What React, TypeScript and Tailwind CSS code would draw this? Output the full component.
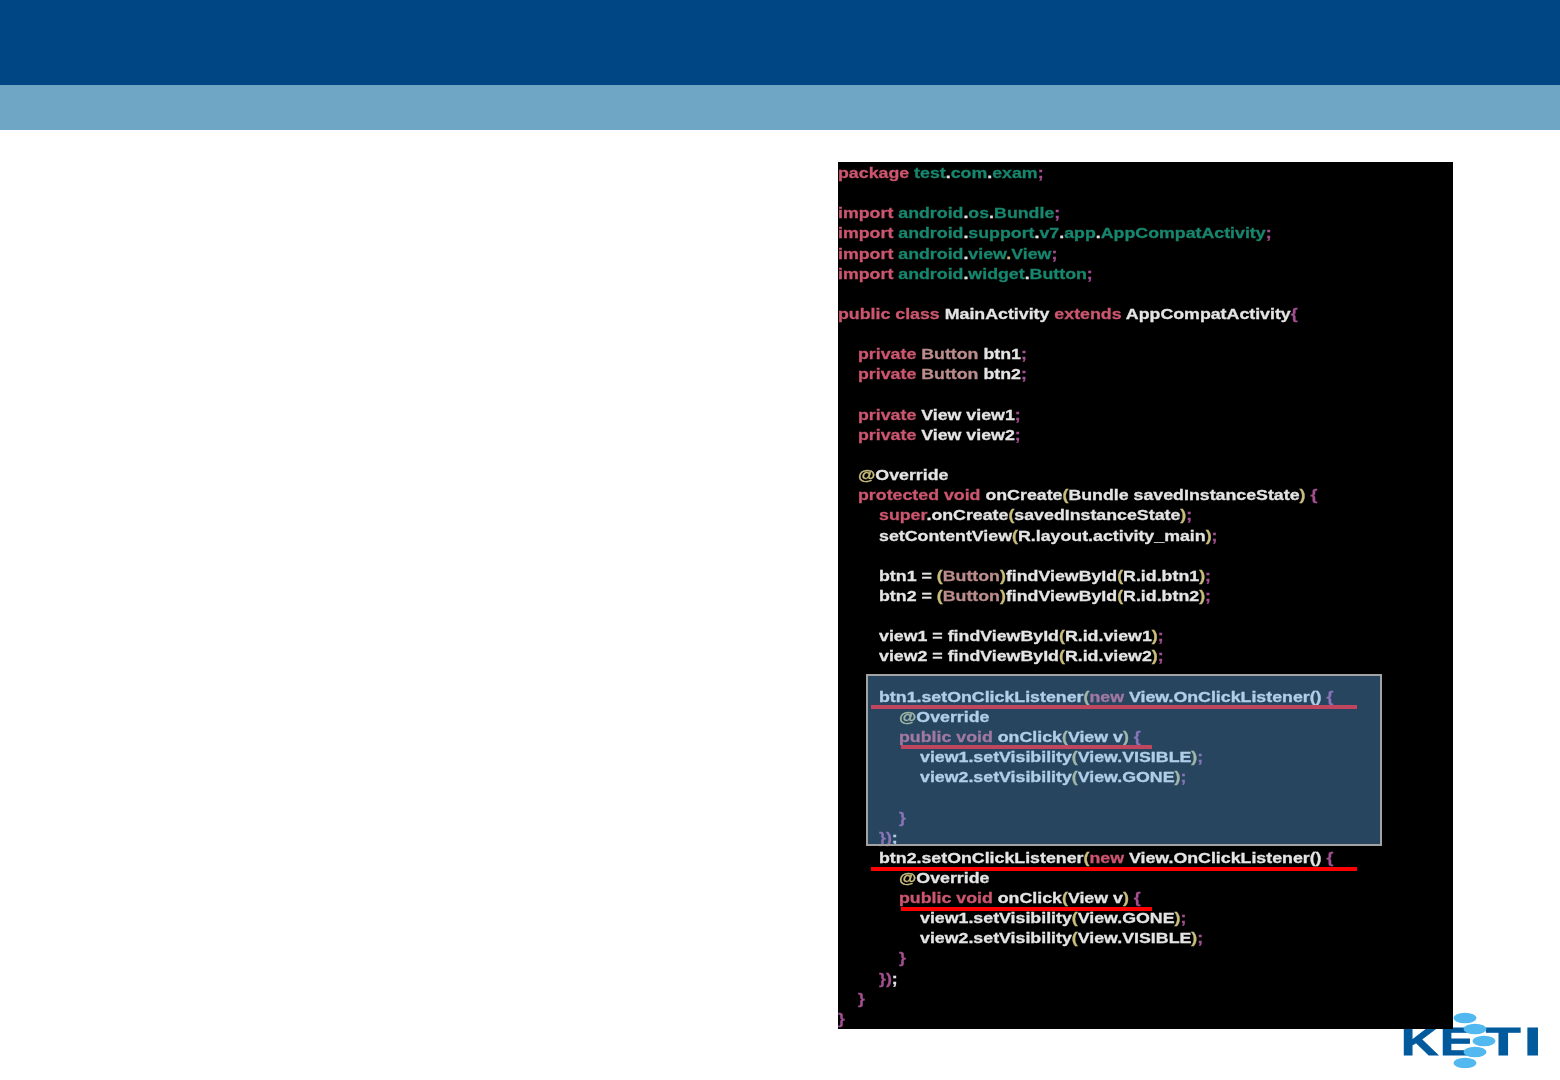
const R = "text-[#cc566f]";
const T = "text-[#17866e]";
const W = "text-[#e4e4e4]";
const Y = "text-[#c9bd7c]";
const P = "text-[#a34f92]";
const B = "text-[#bb8c8c]";

const INDENT = ["pl-0", "pl-[20px]", "pl-[41px]", "pl-[61px]", "pl-[82px]"];

type Seg = [string, string];
type Line = { level?: number; segs?: Seg[] };

const clickBlock = (name: string, first: string, second: string): Line[] => [
  { level: 2, segs: [[W, `${name}.setOnClickListener`], [Y, "("], [R, "new"], [W, " View.OnClickListener() "], [P, "{"]] },
  { level: 3, segs: [[Y, "@"], [W, "Override"]] },
  { level: 3, segs: [[R, "public void "], [W, "onClick"], [Y, "("], [W, "View v"], [Y, ")"], [P, " {"]] },
  { level: 4, segs: [[W, "view1.setVisibility"], [Y, "("], [W, `View.${first}`], [Y, ")"], [P, ";"]] },
  { level: 4, segs: [[W, "view2.setVisibility"], [Y, "("], [W, `View.${second}`], [Y, ")"], [P, ";"]] },
];

const lines: Line[] = [
  { segs: [[R, "package "], [T, "test"], [W, "."], [T, "com"], [W, "."], [T, "exam"], [P, ";"]] },
  {},
  { segs: [[R, "import "], [T, "android"], [W, "."], [T, "os"], [W, "."], [T, "Bundle"], [P, ";"]] },
  { segs: [[R, "import "], [T, "android"], [W, "."], [T, "support"], [W, "."], [T, "v7"], [W, "."], [T, "app"], [W, "."], [T, "AppCompatActivity"], [P, ";"]] },
  { segs: [[R, "import "], [T, "android"], [W, "."], [T, "view"], [Y, "."], [T, "View"], [P, ";"]] },
  { segs: [[R, "import "], [T, "android"], [W, "."], [T, "widget"], [W, "."], [T, "Button"], [P, ";"]] },
  {},
  { segs: [[R, "public class "], [W, "MainActivity "], [R, "extends "], [W, "AppCompatActivity"], [P, "{"]] },
  {},
  { level: 1, segs: [[R, "private "], [B, "Button "], [W, "btn1"], [P, ";"]] },
  { level: 1, segs: [[R, "private "], [B, "Button "], [W, "btn2"], [P, ";"]] },
  {},
  { level: 1, segs: [[R, "private "], [W, "View view1"], [P, ";"]] },
  { level: 1, segs: [[R, "private "], [W, "View view2"], [P, ";"]] },
  {},
  { level: 1, segs: [[Y, "@"], [W, "Override"]] },
  { level: 1, segs: [[R, "protected void "], [W, "onCreate"], [Y, "("], [W, "Bundle savedInstanceState"], [Y, ")"], [P, " {"]] },
  { level: 2, segs: [[R, "super"], [W, ".onCreate"], [Y, "("], [W, "savedInstanceState"], [Y, ")"], [P, ";"]] },
  { level: 2, segs: [[W, "setContentView"], [Y, "("], [W, "R.layout.activity_main"], [Y, ")"], [P, ";"]] },
  {},
  { level: 2, segs: [[W, "btn1 = "], [Y, "("], [B, "Button"], [Y, ")"], [W, "findViewById"], [Y, "("], [W, "R.id.btn1"], [Y, ")"], [P, ";"]] },
  { level: 2, segs: [[W, "btn2 = "], [Y, "("], [B, "Button"], [Y, ")"], [W, "findViewById"], [Y, "("], [W, "R.id.btn2"], [Y, ")"], [P, ";"]] },
  {},
  { level: 2, segs: [[W, "view1 = findViewById"], [Y, "("], [W, "R.id.view1"], [Y, ")"], [P, ";"]] },
  { level: 2, segs: [[W, "view2 = findViewById"], [Y, "("], [W, "R.id.view2"], [Y, ")"], [P, ";"]] },
  {},
  ...clickBlock("btn1", "VISIBLE", "GONE"),
  {},
  { level: 3, segs: [[P, "}"]] },
  { level: 2, segs: [[P, "})"], [W, ";"]] },
  ...clickBlock("btn2", "GONE", "VISIBLE"),
  { level: 3, segs: [[P, "}"]] },
  { level: 2, segs: [[P, "})"], [W, ";"]] },
  { level: 1, segs: [[P, "}"]] },
  { segs: [[P, "}"]] },
];

function CodeLine({ line }: { line: Line }) {
  return (
    <div className={`h-[20.15px] whitespace-pre ${INDENT[line.level ?? 0]}`}>
      <span className="inline-block origin-left scale-x-[1.185]">
        {line.segs?.map((s, i) => (
          <span key={i} className={s[0]}>{s[1]}</span>
        ))}
      </span>
    </div>
  );
}

function Logo() {
  return (
    <div className="absolute right-[20px] bottom-[12px] w-[137px] h-[56px]">
      <div className="flex pt-[13px] -ml-[2px] font-['Liberation_Sans',sans-serif] font-bold text-[39px] leading-[34px] text-[#005a9c] [-webkit-text-stroke:1px_#005a9c]">
        <span className="w-[39px] origin-left scale-x-[1.32]">K</span>
        <span className="w-[46px] origin-left scale-x-[1.3]">E</span>
        <span className="w-[38px] origin-left scale-x-[1.45]">T</span>
        <span className="w-[12px] origin-left scale-x-[1.6]">I</span>
      </div>
      <svg className="absolute inset-0" width="137" height="56" viewBox="0 0 137 56">
        <g fill="#52b8f0">
          <ellipse cx="62" cy="6" rx="11.5" ry="5.2" />
          <ellipse cx="72" cy="17" rx="11.5" ry="5.2" />
          <ellipse cx="81" cy="29" rx="11.5" ry="5.2" />
          <ellipse cx="72" cy="40" rx="11.5" ry="5.2" />
          <ellipse cx="62" cy="51" rx="11.5" ry="5.2" />
        </g>
      </svg>
    </div>
  );
}

export default function App() {
  return (
    <main className="relative h-[1080px] bg-white overflow-hidden">
      <div className="h-[85px] bg-[#004684]" />
      <div className="h-[45px] bg-[#6fa6c6]" />
      <Logo />
      <div className="flex justify-end pt-[32px] pr-[107px]">
        <div className="relative w-[615px] h-[867px] bg-black overflow-hidden">
          <div className="pt-px blur-[0.6px] font-['Liberation_Sans',sans-serif] font-bold text-[15px] leading-[20.15px] [-webkit-text-stroke-width:0.3px]">
            {lines.map((line, i) => (
              <CodeLine key={i} line={line} />
            ))}
          </div>
          {/* underlines sit below the highlight box so the top pair turn pink */}
          <div className="absolute left-[33px] top-[543px] w-[486px] h-[4px] bg-[#ff0000]" />
          <div className="absolute left-[63px] top-[583px] w-[251px] h-[4px] bg-[#ff0000]" />
          <div className="absolute left-[33px] top-[705px] w-[486px] h-[4px] bg-[#ff0000]" />
          <div className="absolute left-[63px] top-[745px] w-[251px] h-[4px] bg-[#ff0000]" />
          <div className="absolute left-[28px] top-[512px] w-[516px] h-[172px] bg-[#61acED]/40 border-2 border-[#a3a3a3]" />
        </div>
      </div>
    </main>
  );
}
